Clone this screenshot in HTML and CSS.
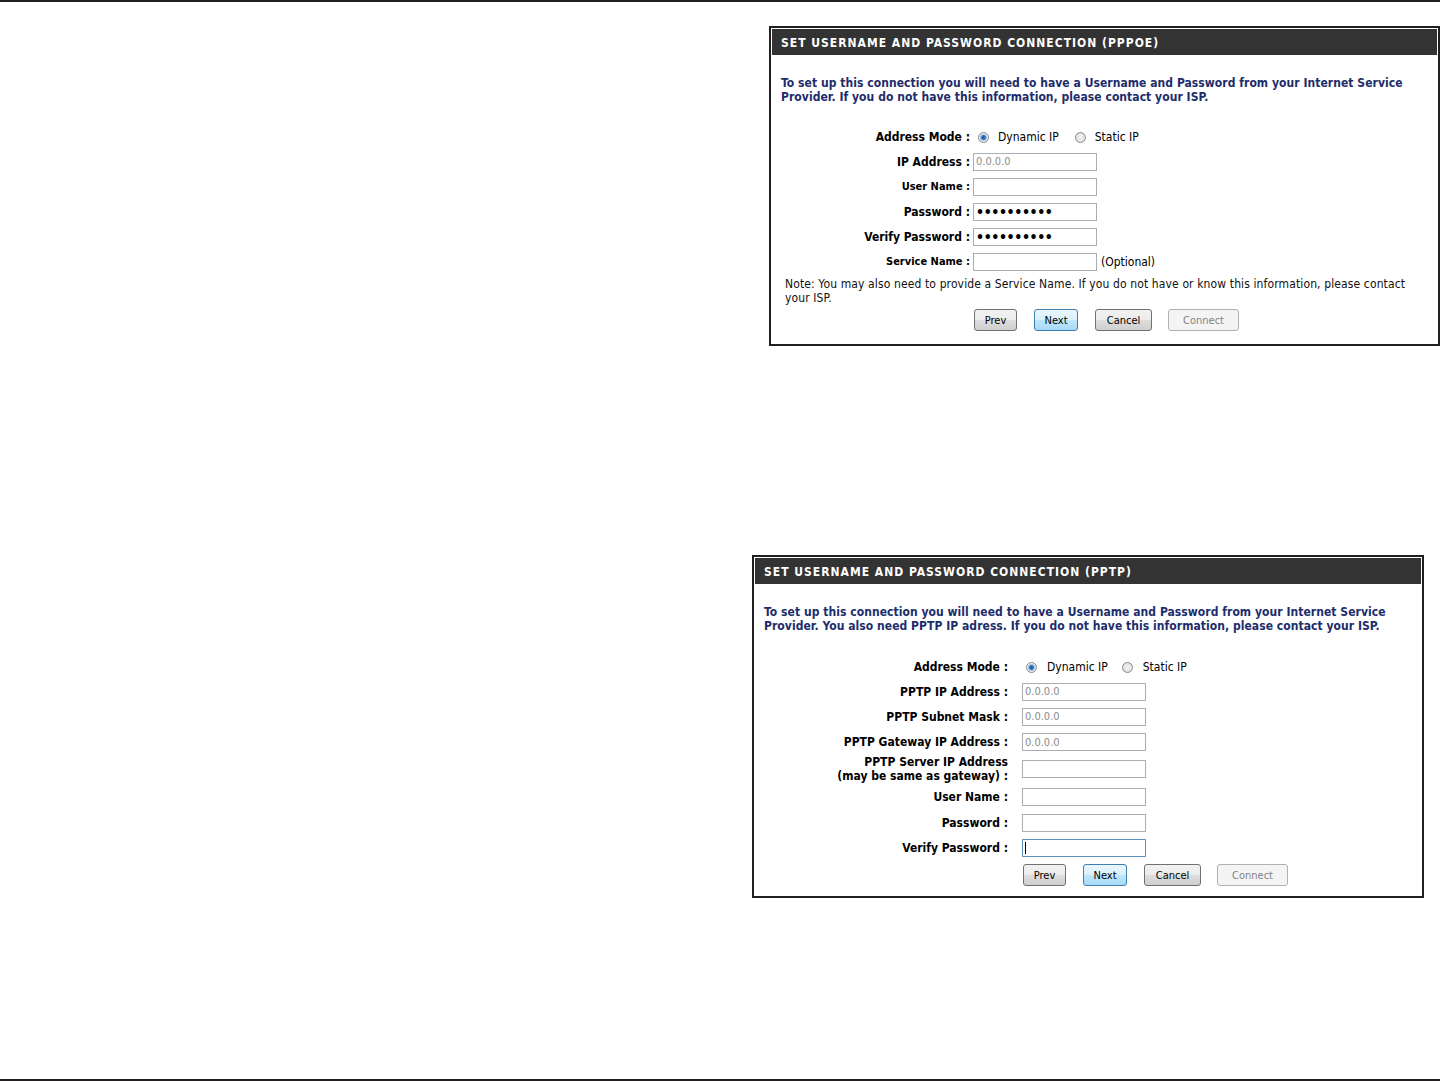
FILE: index.html
```html
<!DOCTYPE html>
<html>
<head>
<meta charset="utf-8">
<title>Internet Connection Setup Wizard</title>
<link rel="stylesheet" href="styles.css">
</head>
<body>
<div class="page">
  <div class="rule"></div>

  <div class="panel panel-pppoe">
    <div class="panel-head">SET USERNAME AND PASSWORD CONNECTION (PPPOE)</div>
    <div class="panel-body">
      <p class="intro">To set up this connection you will need to have a Username and Password from your Internet Service<br>Provider. If you do not have this information, please contact your ISP.</p>
      <div class="form">
        <label>Address Mode :</label>
        <div class="modes">
          <input type="radio" name="mode1" checked><span>Dynamic IP</span>
          <input type="radio" name="mode1"><span>Static IP</span>
        </div>
        <label>IP Address :</label>
        <div><input type="text" class="field ip" value="0.0.0.0"></div>
        <label class="small">User Name :</label>
        <div><input type="text" class="field"></div>
        <label>Password :</label>
        <div><input type="password" class="field" value="secretpass"></div>
        <label>Verify Password :</label>
        <div><input type="password" class="field" value="secretpass"></div>
        <label class="small">Service Name :</label>
        <div class="with-hint"><input type="text" class="field"><span>(Optional)</span></div>
      </div>
      <p class="note">Note: You may also need to provide a Service Name. If you do not have or know this information, please contact<br>your ISP.</p>
      <div class="buttons">
        <button class="btn btn-prev">Prev</button>
        <button class="btn btn-next">Next</button>
        <button class="btn btn-cancel">Cancel</button>
        <button class="btn btn-connect" disabled>Connect</button>
      </div>
    </div>
  </div>

  <div class="panel panel-pptp">
    <div class="panel-head">SET USERNAME AND PASSWORD CONNECTION (PPTP)</div>
    <div class="panel-body">
      <p class="intro">To set up this connection you will need to have a Username and Password from your Internet Service<br>Provider. You also need PPTP IP adress. If you do not have this information, please contact your ISP.</p>
      <div class="form">
        <label>Address Mode :</label>
        <div class="modes">
          <input type="radio" name="mode2" checked><span>Dynamic IP</span>
          <input type="radio" name="mode2"><span>Static IP</span>
        </div>
        <label>PPTP IP Address :</label>
        <div><input type="text" class="field ip" value="0.0.0.0"></div>
        <label>PPTP Subnet Mask :</label>
        <div><input type="text" class="field ip" value="0.0.0.0"></div>
        <label>PPTP Gateway IP Address :</label>
        <div><input type="text" class="field ip" value="0.0.0.0"></div>
        <label>PPTP Server IP Address<br>(may be same as gateway) :</label>
        <div><input type="text" class="field"></div>
        <label>User Name :</label>
        <div><input type="text" class="field"></div>
        <label>Password :</label>
        <div><input type="password" class="field"></div>
        <label>Verify Password :</label>
        <div><span class="caret-wrap"><input type="password" class="field focused"></span></div>
      </div>
      <div class="buttons">
        <button class="btn btn-prev">Prev</button>
        <button class="btn btn-next">Next</button>
        <button class="btn btn-cancel">Cancel</button>
        <button class="btn btn-connect" disabled>Connect</button>
      </div>
    </div>
  </div>

  <div class="rule rule-bottom"></div>
</div>
</body>
</html>
```

FILE: styles.css
```css
body {
  margin: 0;
  background: #fff;
  font-family: "DejaVu Sans Condensed", "DejaVu Sans", sans-serif;
  font-size: 12px;
  color: #000;
}

.page {
  height: 1081px;
  display: flex;
  flex-direction: column;
}

.rule {
  height: 2px;
  background: #231f20;
  flex: none;
}
.rule-bottom { margin-top: auto; }

/* panels */
.panel {
  border: 2px solid #231f20;
  padding: 1px;
  background: #fff;
  flex: none;
}
.panel-pppoe {
  width: 665px;
  margin: 24px 0 0 769px;
}
.panel-pptp {
  width: 666px;
  margin: 209px 0 0 752px;
}

.panel-head {
  height: 24px;
  line-height: 24px;
  padding: 2px 0 0 9px;
  background: #333;
  color: #fff;
  font-weight: bold;
  font-size: 12px;
  letter-spacing: 1px;
}

.panel-body {
  padding: 21px 9px 12px 9px;
}
.panel-pptp .panel-body { padding-bottom: 9px; }

.intro {
  margin: 0;
  line-height: 14px;
  font-weight: bold;
  color: #1d2d6b;
  letter-spacing: 0.05px;
}

/* form grid */
.form {
  display: grid;
  grid-template-columns: 189px auto;
  column-gap: 3px;
  grid-template-rows: 24px repeat(5, 25px);
  align-items: center;
  margin-top: 21px;
}
.panel-pptp .form {
  grid-template-columns: 244px auto;
  column-gap: 14px;
  grid-template-rows: 24px 25px 25px 26px 28px 27px 25px 26px;
  margin-top: 22px;
}
.form label {
  text-align: right;
  font-weight: bold;
  line-height: 14px;
}
.form label.small { font-size: 11px; }

.form > div {
  display: flex;
  align-items: center;
}

.modes span { margin: 0 11px 0 9px; }
.panel-pptp .modes span { margin: 0 10px 0 10px; }

input[type=radio] {
  appearance: none;
  -webkit-appearance: none;
  width: 11px;
  height: 11px;
  margin: 0 0 0 5px;
  border: 1px solid #8b8b8b;
  border-radius: 50%;
  background: radial-gradient(circle, #f4f4f4 0, #d8d8d8 100%);
  box-sizing: border-box;
}
.panel-pptp input[type=radio] { margin-left: 4px; }
input[type=radio]:checked {
  background: radial-gradient(circle, #1f4e8c 0, #3f7cc0 2px, #9cc3ea 3px, #ececec 4px);
}

.field {
  width: 124px;
  height: 18px;
  box-sizing: border-box;
  border: 1px solid #abadb3;
  padding: 0 2px;
  margin: 0;
  font-family: inherit;
  font-size: 11px;
  color: #000;
  background: #fff;
  outline: none;
}
.field[type=password] {
  font-size: 14px;
  font-weight: bold;
  letter-spacing: -0.4px;
}
.field.ip { color: #8c8c8c; }
.field.focused { border-color: #5f93c6; }

.caret-wrap {
  position: relative;
  display: inline-block;
  height: 18px;
}
.caret-wrap::after {
  content: "";
  position: absolute;
  left: 3px;
  top: 3px;
  width: 1px;
  height: 12px;
  background: #000;
}

.with-hint span { margin-left: 4px; }

.note {
  margin: 3px 0 0 4px;
  line-height: 14px;
  color: #111;
  letter-spacing: 0.12px;
}

/* buttons */
.buttons {
  display: flex;
  gap: 17px;
  padding-left: 193px;
  margin-top: 4px;
}
.panel-pptp .buttons {
  padding-left: 259px;
  margin-top: 3px;
}

.btn {
  height: 22px;
  padding: 0;
  border: 1px solid #707070;
  border-radius: 3px;
  background: linear-gradient(#f2f2f2 0, #ebebeb 50%, #dddddd 51%, #cfcfcf 100%);
  font-family: inherit;
  font-size: 11px;
  color: #000;
}
.btn-prev { width: 43px; }
.btn-next {
  width: 44px;
  border-color: #3c7fb1;
  background: linear-gradient(#eaf6fd 0, #d9f0fc 50%, #bee6fd 51%, #a7d9f5 100%);
}
.btn-cancel { width: 57px; margin-right: -1px; }
.btn-connect {
  width: 71px;
  border-color: #adb2b5;
  background: #f4f4f4;
  color: #838383;
}
```
